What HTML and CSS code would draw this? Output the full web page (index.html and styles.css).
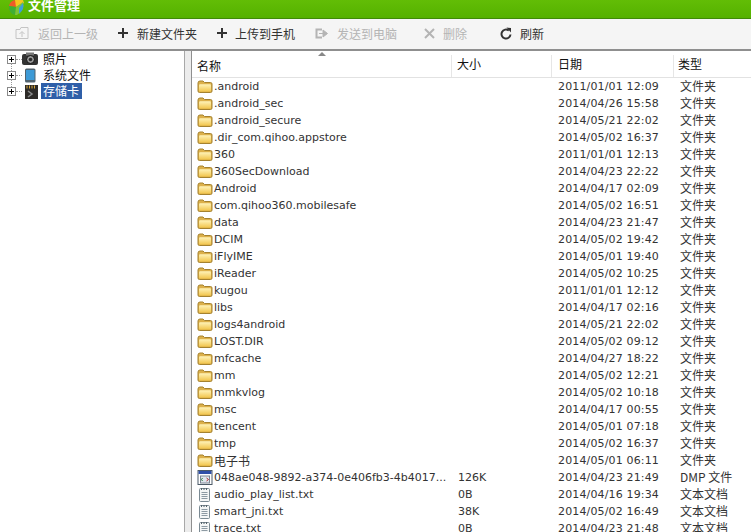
FILE: index.html
```html
<!DOCTYPE html>
<html lang="zh">
<head>
<meta charset="utf-8">
<title>文件管理</title>
<link rel="stylesheet" href="styles.css">
</head>
<body>
<svg class="defs" width="0" height="0" aria-hidden="true">
  <defs>
    <linearGradient id="fg" x1="0" y1="0" x2="0" y2="1"><stop offset="0" stop-color="#fff3b8"/><stop offset="1" stop-color="#f2c64e"/></linearGradient>
    <symbol id="folder" viewBox="0 0 16 14">
      <path d="M1 3.5 Q1 1.5 3 1.5 H6 L7.5 3 H13.5 Q15 3 15 4.5 V11.5 Q15 13 13.5 13 H2.5 Q1 13 1 11.5 Z" fill="#dcb04a" stroke="#a5822f"/>
      <path d="M2 6 Q2 4.8 3.2 4.8 H13 Q14 4.8 14 6 V11 Q14 12 13 12 H3 Q2 12 2 11 Z" fill="url(#fg)"/>
    </symbol>
    <symbol id="txt" viewBox="0 0 14 15">
      <rect x="1.5" y="1.5" width="10" height="13" rx="1" fill="#f4f6f6" stroke="#7b8a93"/>
      <path d="M3.5 1V3M6 1V3M8.5 1V3" stroke="#55636b"/>
      <path d="M3.5 5.5H9.5M3.5 7.5H9.5M3.5 9.5H9.5M3.5 11.5H9.5" stroke="#8d9aa3"/>
    </symbol>
    <symbol id="dmp" viewBox="0 0 15 15">
      <rect x="0.5" y="0.5" width="14" height="14" fill="#fff" stroke="#4c5a68"/>
      <rect x="1" y="1" width="13" height="3" fill="#2f4fa8"/>
      <rect x="3" y="6" width="9" height="7" fill="#dfe6ee" stroke="#7c8794"/>
      <path d="M5 8L4 9.5L5 11" stroke="#2b7a3a" fill="none"/>
      <path d="M9 8L11 9.5L9 11" stroke="#b03030" fill="none"/>
    </symbol>
    <symbol id="expander" viewBox="0 0 9 9">
      <rect x="0.5" y="0.5" width="8" height="8" fill="#fff" stroke="#8a8a8a"/>
      <path d="M2 4.5H7M4.5 2V7" stroke="#000"/>
    </symbol>
  </defs>
</svg>

<header class="titlebar">
  <svg class="logo" width="17" height="15" viewBox="0 0 17 15" aria-hidden="true">
    <path d="M1 6 Q2 1 7 0 L9 0 L8 7Z" fill="#ef5a28"/>
    <path d="M7 0 H15 L16 3 L8 7Z" fill="#f5c51d"/>
    <path d="M1 6 L8 7 L7 15 Q2 14 1 8Z" fill="#3fae34"/>
    <path d="M8 7 L15 2 Q17 10 9 15 H7Z" fill="#7cc43a"/>
    <path d="M11 8 L15 3 Q17 9 11 14Z" fill="#3c9fd8"/>
  </svg>
  <span class="app-title">文件管理</span>
</header>

<nav class="toolbar">
  <div class="tool off first">
    <svg width="14" height="14" viewBox="0 0 14 14" aria-hidden="true"><path d="M1 3.5H5L6 1.5H13V12.5H1Z" fill="none" stroke="#c4c4c4"/><path d="M7 11V6M4.5 8L7 5.5L9.500 8" fill="none" stroke="#c4c4c4"/></svg>
    <span>返回上一级</span>
  </div>
  <div class="tool new">
    <svg width="10" height="10" viewBox="0 0 10 10" aria-hidden="true"><path d="M5 0V10M0 5H10" stroke="#333" stroke-width="2"/></svg>
    <span>新建文件夹</span>
  </div>
  <div class="tool upload">
    <svg width="10" height="10" viewBox="0 0 10 10" aria-hidden="true"><path d="M5 0V10M0 5H10" stroke="#333" stroke-width="2"/></svg>
    <span>上传到手机</span>
  </div>
  <div class="tool off send">
    <svg width="13" height="11" viewBox="0 0 13 11" aria-hidden="true"><path d="M7 1.500H1.500V9.500H7" fill="none" stroke="#b4b4b4" stroke-width="2"/><path d="M4 5.500H9M8 2L12.500 5.500L8 9Z" fill="#b4b4b4" stroke="#b4b4b4"/></svg>
    <span>发送到电脑</span>
  </div>
  <div class="tool off del">
    <svg width="11" height="11" viewBox="0 0 11 11" aria-hidden="true"><path d="M1 1L10 10M10 1L1 10" stroke="#b4b4b4" stroke-width="2"/></svg>
    <span>删除</span>
  </div>
  <div class="tool refresh">
    <svg width="12" height="13" viewBox="0 0 12 13" aria-hidden="true"><path d="M8.800 3.500A4.500 4.500 0 1 0 10.500 7.500" fill="none" stroke="#333" stroke-width="2"/><path d="M6.500 0.500L11 1V5.500Z" fill="#333"/></svg>
    <span>刷新</span>
  </div>
</nav>

<main class="panes">
  <aside class="tree">
    <div class="node">
      <svg class="exp" width="9" height="9"><use href="#expander"/></svg>
      <i class="dots"></i>
      <svg class="node-icon" width="16" height="14" viewBox="0 0 16 14" aria-hidden="true"><rect x="0" y="2" width="16" height="11" rx="2" fill="#333"/><rect x="4" y="0.500" width="8" height="3" fill="#777"/><circle cx="8.500" cy="7.500" r="4" fill="#999" stroke="#111"/><circle cx="8.500" cy="7.500" r="1.800" fill="#2b2b2b"/></svg>
      <span class="node-label">照片</span>
    </div>
    <div class="node">
      <svg class="exp" width="9" height="9"><use href="#expander"/></svg>
      <i class="dots"></i>
      <svg class="node-icon" width="16" height="15" viewBox="0 0 16 15" aria-hidden="true"><rect x="3" y="0.500" width="10.500" height="14" rx="1.500" fill="#51626e"/><rect x="4" y="2" width="8.500" height="10" fill="#3d9ad6"/></svg>
      <span class="node-label">系统文件</span>
    </div>
    <div class="node">
      <svg class="exp" width="9" height="9"><use href="#expander"/></svg>
      <i class="dots"></i>
      <svg class="node-icon" width="16" height="15" viewBox="0 0 16 15" aria-hidden="true"><path d="M3 1H16V15H3Z" fill="#2d2a27"/><path d="M5 1.500V4.500M7.500 1.500V4.500M10 1.500V4.500M12.500 1.500V4.500" stroke="#d9a83a"/><path d="M6 7L10 10L6 13" fill="none" stroke="#8b8b8b" stroke-width="1.500"/></svg>
      <span class="node-label sel">存储卡</span>
    </div>
  </aside>

  <div class="splitter"></div>

  <section class="files">
    <div class="sort-mark"></div>
    <div class="row head">
      <div class="c-name">名称</div>
      <div class="c-size">大小</div>
      <div class="c-date">日期</div>
      <div class="c-type">类型</div>
    </div>
    <div class="row"><div class="c-name"><svg class="fi"><use href="#folder"/></svg><span>.android</span></div><div class="c-size"></div><div class="c-date">2011/01/01 12:09</div><div class="c-type">文件夹</div></div>
    <div class="row"><div class="c-name"><svg class="fi"><use href="#folder"/></svg><span>.android_sec</span></div><div class="c-size"></div><div class="c-date">2014/04/26 15:58</div><div class="c-type">文件夹</div></div>
    <div class="row"><div class="c-name"><svg class="fi"><use href="#folder"/></svg><span>.android_secure</span></div><div class="c-size"></div><div class="c-date">2014/05/21 22:02</div><div class="c-type">文件夹</div></div>
    <div class="row"><div class="c-name"><svg class="fi"><use href="#folder"/></svg><span>.dir_com.qihoo.appstore</span></div><div class="c-size"></div><div class="c-date">2014/05/02 16:37</div><div class="c-type">文件夹</div></div>
    <div class="row"><div class="c-name"><svg class="fi"><use href="#folder"/></svg><span>360</span></div><div class="c-size"></div><div class="c-date">2011/01/01 12:13</div><div class="c-type">文件夹</div></div>
    <div class="row"><div class="c-name"><svg class="fi"><use href="#folder"/></svg><span>360SecDownload</span></div><div class="c-size"></div><div class="c-date">2014/04/23 22:22</div><div class="c-type">文件夹</div></div>
    <div class="row"><div class="c-name"><svg class="fi"><use href="#folder"/></svg><span>Android</span></div><div class="c-size"></div><div class="c-date">2014/04/17 02:09</div><div class="c-type">文件夹</div></div>
    <div class="row"><div class="c-name"><svg class="fi"><use href="#folder"/></svg><span>com.qihoo360.mobilesafe</span></div><div class="c-size"></div><div class="c-date">2014/05/02 16:51</div><div class="c-type">文件夹</div></div>
    <div class="row"><div class="c-name"><svg class="fi"><use href="#folder"/></svg><span>data</span></div><div class="c-size"></div><div class="c-date">2014/04/23 21:47</div><div class="c-type">文件夹</div></div>
    <div class="row"><div class="c-name"><svg class="fi"><use href="#folder"/></svg><span>DCIM</span></div><div class="c-size"></div><div class="c-date">2014/05/02 19:42</div><div class="c-type">文件夹</div></div>
    <div class="row"><div class="c-name"><svg class="fi"><use href="#folder"/></svg><span>iFlyIME</span></div><div class="c-size"></div><div class="c-date">2014/05/01 19:40</div><div class="c-type">文件夹</div></div>
    <div class="row"><div class="c-name"><svg class="fi"><use href="#folder"/></svg><span>iReader</span></div><div class="c-size"></div><div class="c-date">2014/05/02 10:25</div><div class="c-type">文件夹</div></div>
    <div class="row"><div class="c-name"><svg class="fi"><use href="#folder"/></svg><span>kugou</span></div><div class="c-size"></div><div class="c-date">2011/01/01 12:12</div><div class="c-type">文件夹</div></div>
    <div class="row"><div class="c-name"><svg class="fi"><use href="#folder"/></svg><span>libs</span></div><div class="c-size"></div><div class="c-date">2014/04/17 02:16</div><div class="c-type">文件夹</div></div>
    <div class="row"><div class="c-name"><svg class="fi"><use href="#folder"/></svg><span>logs4android</span></div><div class="c-size"></div><div class="c-date">2014/05/21 22:02</div><div class="c-type">文件夹</div></div>
    <div class="row"><div class="c-name"><svg class="fi"><use href="#folder"/></svg><span>LOST.DIR</span></div><div class="c-size"></div><div class="c-date">2014/05/02 09:12</div><div class="c-type">文件夹</div></div>
    <div class="row"><div class="c-name"><svg class="fi"><use href="#folder"/></svg><span>mfcache</span></div><div class="c-size"></div><div class="c-date">2014/04/27 18:22</div><div class="c-type">文件夹</div></div>
    <div class="row"><div class="c-name"><svg class="fi"><use href="#folder"/></svg><span>mm</span></div><div class="c-size"></div><div class="c-date">2014/05/02 12:21</div><div class="c-type">文件夹</div></div>
    <div class="row"><div class="c-name"><svg class="fi"><use href="#folder"/></svg><span>mmkvlog</span></div><div class="c-size"></div><div class="c-date">2014/05/02 10:18</div><div class="c-type">文件夹</div></div>
    <div class="row"><div class="c-name"><svg class="fi"><use href="#folder"/></svg><span>msc</span></div><div class="c-size"></div><div class="c-date">2014/04/17 00:55</div><div class="c-type">文件夹</div></div>
    <div class="row"><div class="c-name"><svg class="fi"><use href="#folder"/></svg><span>tencent</span></div><div class="c-size"></div><div class="c-date">2014/05/01 07:18</div><div class="c-type">文件夹</div></div>
    <div class="row"><div class="c-name"><svg class="fi"><use href="#folder"/></svg><span>tmp</span></div><div class="c-size"></div><div class="c-date">2014/05/02 16:37</div><div class="c-type">文件夹</div></div>
    <div class="row"><div class="c-name"><svg class="fi"><use href="#folder"/></svg><span class="cjk">电子书</span></div><div class="c-size"></div><div class="c-date">2014/05/01 06:11</div><div class="c-type">文件夹</div></div>
    <div class="row"><div class="c-name"><svg class="fi"><use href="#dmp"/></svg><span>048ae048-9892-a374-0e406fb3-4b4017...</span></div><div class="c-size">126K</div><div class="c-date">2014/04/23 21:49</div><div class="c-type">DMP 文件</div></div>
    <div class="row"><div class="c-name"><svg class="fi"><use href="#txt"/></svg><span>audio_play_list.txt</span></div><div class="c-size">0B</div><div class="c-date">2014/04/16 19:34</div><div class="c-type">文本文档</div></div>
    <div class="row"><div class="c-name"><svg class="fi"><use href="#txt"/></svg><span>smart_jni.txt</span></div><div class="c-size">38K</div><div class="c-date">2014/05/02 16:49</div><div class="c-type">文本文档</div></div>
    <div class="row"><div class="c-name"><svg class="fi"><use href="#txt"/></svg><span>trace.txt</span></div><div class="c-size">0B</div><div class="c-date">2014/04/23 21:48</div><div class="c-type">文本文档</div></div>
  </section>
</main>
</body>
</html>
```
FILE: styles.css
```css
* { box-sizing: border-box; }
html, body { margin: 0; height: 100%; overflow: hidden; background: #fff; }
body {
  display: flex;
  flex-direction: column;
  font: 12px/17px "Noto Sans CJK SC", sans-serif;
  color: #333;
}
.defs { position: absolute; }

.titlebar {
  flex: none;
  height: 19px;
  display: flex;
  align-items: flex-start;
  gap: 3px;
  overflow: hidden;
  padding-left: 8px;
  background: linear-gradient(#62bd06, #55b100);
  border-bottom: 1px solid #3f8a08;
}
.logo { flex: none; }
.app-title {
  margin-top: -2px;
  font-size: 13px;
  line-height: 14px;
  font-weight: 700;
  color: #fff;
}

.toolbar {
  flex: none;
  height: 30px;
  display: flex;
  align-items: center;
  padding-bottom: 2px;
  background: #f5f5f5;
  color: #333;
}
.tool { display: flex; align-items: center; gap: 9px; }
.tool.off { color: #b4b4b4; }
.first { margin-left: 15px; }
.new { margin-left: 20px; }
.upload { margin-left: 20px; gap: 8px; }
.send { margin-left: 20px; }
.del { margin-left: 27px; gap: 8px; }
.refresh { margin-left: 33px; gap: 8px; }

.panes {
  flex: 1;
  min-height: 0;
  display: flex;
  border-top: 2px solid #8f8f8f;
}

.tree { flex: none; width: 185px; background: #fff; border-right: 1px solid #a8a8a8; }
.node { height: 16px; display: flex; align-items: center; padding-left: 7px; color: #111; position: relative; }
.node + .node::before {
  content: "";
  position: absolute;
  left: 11px;
  top: -4px;
  height: 8px;
  border-left: 1px dotted #999;
}
.exp { flex: none; }
.dots { flex: none; width: 6px; border-top: 1px dotted #999; }
.node-icon { flex: none; margin-right: 3px; }
.node-label { padding: 0 3px 0 2px; line-height: 16px; }
.sel { background: #2f5fa8; color: #fff; }

.splitter {
  flex: none;
  width: 7px;
  background: #ececec;
  border-right: 1px solid #8f8f8f;
}

.files { flex: 1; min-width: 0; position: relative; overflow: hidden; }
.sort-mark {
  position: absolute;
  left: 126px;
  top: 1px;
  width: 0;
  height: 0;
  border: 4px solid transparent;
  border-top: 0;
  border-bottom: 4px solid #888;
}

.row {
  display: grid;
  grid-template-columns: 260px 100px 122px 1fr;
  height: 17px;
  white-space: nowrap;
}
.row > div { overflow: hidden; }
.c-name { display: flex; align-items: center; padding-left: 5px; }
.c-name span { margin-left: 1px; font: 11px/17px "DejaVu Sans", sans-serif; }
.c-name span.cjk { font: 12px/17px "Noto Sans CJK SC", sans-serif; }
.c-size { padding-left: 6px; font: 11px/17px "DejaVu Sans", sans-serif; }
.c-date { padding-left: 6px; font: 11px/17px "DejaVu Sans", sans-serif; letter-spacing: 0.15px; }
.c-type { padding-left: 6px; line-height: 16px; }
.fi { flex: none; width: 16px; height: 15px; }

.row.head {
  height: 27px;
  color: #111;
  border-bottom: 1px solid #e2e2e2;
}
.head > div {
  margin-top: 4px;
  height: 22px;
  padding-left: 5px;
  border-right: 1px solid #e6e6e6;
  font: 12px/18px "Noto Sans CJK SC", sans-serif;
  letter-spacing: 0;
}
.head .c-date { padding-left: 6px; }
.head .c-type { border-right: 0; padding-left: 4px; }
```
